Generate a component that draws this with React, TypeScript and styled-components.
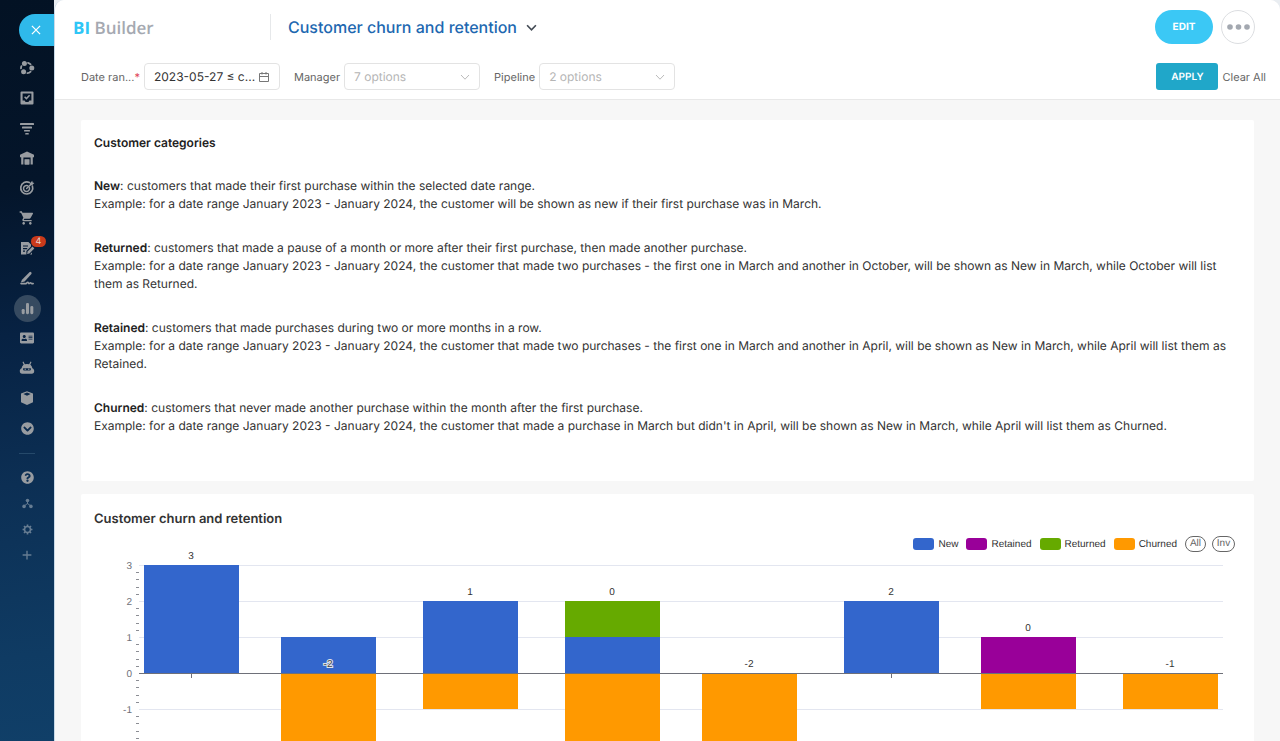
import React from "react";
import styled, { createGlobalStyle, css } from "styled-components";
import { MdShoppingCart } from "react-icons/md";
import { FaAddressCard, FaChevronCircleDown, FaQuestionCircle } from "react-icons/fa";

const Global = createGlobalStyle`
  * { box-sizing: border-box; }
  body { margin: 0; font-family: Inter, "Liberation Sans", sans-serif; font-size: 12px; color: #333; background: #e9edf1; text-rendering: geometricPrecision; }
  button, select { font-family: inherit; margin: 0; text-rendering: inherit; }
`;

const Shell = styled.div`
  display: flex;
  height: 100vh;
`;

const Nav = styled.nav`
  flex: 0 0 54px;
  display: flex;
  flex-direction: column;
  padding-top: 14px;
  background: linear-gradient(172deg, #031224 0%, #04152a 25%, #072243 45%, #0c2f54 65%, #0f3b63 88%, #103f68 100%);
  overflow: hidden;
`;

const CloseTab = styled.button`
  display: flex;
  align-items: center;
  align-self: flex-end;
  width: 35px;
  height: 32px;
  flex: none;
  padding: 0 0 0 12px;
  margin-bottom: 7px;
  border: 0;
  border-radius: 16px 0 0 16px;
  background: #2fb9ea;
  color: #fff;
`;

const NavItem = styled.a<{ $small?: boolean; $dim?: boolean }>`
  position: relative;
  flex: none;
  display: flex;
  align-items: center;
  justify-content: center;
  height: ${(p) => (p.$small ? 26 : 30)}px;
  color: ${(p) => (p.$dim ? "#667c92" : "#989ca1")};
`;

const ActiveRing = styled.span`
  display: flex;
  align-items: center;
  justify-content: center;
  width: 27px;
  height: 27px;
  border-radius: 50%;
  background: #364a60;
`;

const NavBadge = styled.span`
  position: absolute;
  top: 3px;
  left: 31px;
  width: 15px;
  height: 11px;
  border-radius: 6px;
  background: #c93a1b;
  color: #e6d6d2;
  font-size: 9px;
  line-height: 11px;
  text-align: center;
`;

const NavRule = styled.hr`
  width: 16px;
  flex: none;
  margin: 10px auto;
  border: 0;
  border-top: 1px solid #25496a;
`;

const Panel = styled.div`
  flex: 1;
  min-width: 0;
  display: flex;
  flex-direction: column;
  border-left: 1px solid #c9dae8;
  border-radius: 10px 10px 0 0;
  background: #f7f7f7;
  overflow: hidden;
`;

const Header = styled.header`
  flex: none;
  background: #fff;
  border-bottom: 1px solid #e8e8e8;
`;

const TitleRow = styled.div`
  display: flex;
  align-items: center;
  height: 54px;
  padding: 0 25px 0 18px;
`;

const Logo = styled.div`
  flex: 0 0 197px;
  font-family: "Open Sans", sans-serif;
  font-size: 17px;
  font-weight: 600;
  color: #a5a9b1;
`;

const LogoMark = styled.span`
  color: #2fc6f6;
  font-weight: 700;
`;

const TitleMenu = styled.button`
  display: flex;
  align-items: center;
  gap: 9px;
  height: 26px;
  padding: 0 0 0 17px;
  border: 0;
  border-left: 1px solid #e6e8ea;
  background: none;
  color: #2067b0;
  font-size: 16px;
  font-weight: 500;
`;

const Actions = styled.div<{ $tight?: boolean }>`
  display: flex;
  align-items: center;
  gap: ${(p) => (p.$tight ? 4 : 8)}px;
  margin-left: auto;
`;

const EditButton = styled.button`
  width: 58px;
  height: 34px;
  padding: 0;
  border: 0;
  border-radius: 17px;
  background: #3bc8f5;
  color: #fff;
  font-size: 10px;
  font-weight: 700;
`;

const MoreButton = styled.button`
  display: flex;
  align-items: center;
  justify-content: center;
  width: 34px;
  height: 34px;
  padding: 0;
  border: 1px solid #dcdee1;
  border-radius: 50%;
  background: #fff;
  color: #a3a8b0;
`;

const FilterRow = styled.div`
  display: flex;
  align-items: center;
  height: 45px;
  padding: 0 14px 0 26px;
`;

const Filter = styled.div`
  display: flex;
  align-items: center;
  gap: 4px;
  margin-right: 14px;
`;

const FilterLabel = styled.label`
  font-size: 11px;
  color: #666;
`;

const Required = styled.span`
  color: #e04355;
`;

const field = css`
  width: 136px;
  height: 27px;
  border: 1px solid #e3e3e3;
  border-radius: 4px;
  background: #fff;
  font-size: 12px;
`;

const DateField = styled.button`
  ${field}
  display: flex;
  align-items: center;
  justify-content: space-between;
  padding: 0 10px 0 9px;
  color: #333;
`;

const SelectWrap = styled.div`
  display: grid;
  align-items: center;
  & > * { grid-area: 1 / 1; }
  & > svg { justify-self: end; margin-right: 10px; pointer-events: none; }
`;

const SelectField = styled.select`
  ${field}
  appearance: none;
  padding: 0 9px;
  color: #b5b5b5;
`;

const ApplyButton = styled.button`
  width: 62px;
  height: 27px;
  padding: 0;
  border: 0;
  border-radius: 3px;
  background: #20a7c9;
  color: #fff;
  font-size: 10px;
  font-weight: 600;
`;

const ClearButton = styled.button`
  padding: 0;
  border: 0;
  background: none;
  color: #666;
  font-size: 11px;
`;

const Board = styled.main`
  flex: 1;
  min-height: 0;
  display: flex;
  flex-direction: column;
  gap: 13px;
  padding: 20px 26px;
  overflow-y: auto;
  scrollbar-width: none;
`;

const Card = styled.section`
  flex: none;
  background: #fff;
  border-radius: 2px;
`;

const TextCard = styled(Card)`
  padding: 14px 13px 46px;
`;

const CardHeading = styled.h2`
  margin: 0 0 25px;
  font-size: 12px;
  line-height: 18px;
  font-weight: 600;
  color: #222;
`;

const Definition = styled.p`
  margin: 0 0 26px;
  font-size: 12px;
  line-height: 18px;
  color: #333;
  &:last-child { margin-bottom: 0; }
`;

const Term = styled.strong`
  font-weight: 600;
  color: #222;
`;

const ChartTitle = styled.h2`
  margin: 0;
  padding: 16px 13px 8px;
  font-size: 13px;
  line-height: 18px;
  font-weight: 600;
  color: #333;
`;

const Legend = styled.div`
  display: flex;
  justify-content: flex-end;
  align-items: center;
  gap: 8px;
  height: 16px;
  padding-right: 19px;
  font-family: "Liberation Sans", sans-serif;
`;

const LegendItem = styled.button`
  display: flex;
  align-items: center;
  gap: 4px;
  padding: 0;
  border: 0;
  background: none;
  color: #333;
  font-size: 10px;
`;

const Swatch = styled.span<{ $color: string }>`
  width: 21px;
  height: 12px;
  border-radius: 3px;
  background: ${(p) => p.$color};
`;

const LegendPick = styled.button<{ $wide?: boolean }>`
  width: ${(p) => (p.$wide ? 23 : 21)}px;
  height: 16px;
  margin-right: ${(p) => (p.$wide ? 0 : -2)}px;
  padding: 0;
  border: 1px solid #666;
  border-radius: 8px;
  background: #fff;
  color: #666;
  font-size: 10px;
  line-height: 14px;
`;

const ChartSvg = styled.svg`
  display: block;
  width: 100%;
  height: auto;
  font-family: "Liberation Sans", sans-serif;
  font-size: 10px;
`;

const BLUE = "#3366cc";
const PURPLE = "#990099";
const GREEN = "#66aa00";
const ORANGE = "#ff9900";

const legend = [
  { name: "New", color: BLUE },
  { name: "Retained", color: PURPLE },
  { name: "Returned", color: GREEN },
  { name: "Churned", color: ORANGE },
];

type Column = { x: number; up: [string, number][]; down: number; label?: string; tick?: boolean };

const columns: Column[] = [
  { x: 63, up: [[BLUE, 3]], down: 0, label: "3", tick: true },
  { x: 200, up: [[BLUE, 1]], down: 3 },
  { x: 342, up: [[BLUE, 2]], down: 1, label: "1" },
  { x: 484, up: [[BLUE, 1], [GREEN, 1]], down: 2, label: "0" },
  { x: 621, up: [], down: 2, label: "-2" },
  { x: 763, up: [[BLUE, 2]], down: 0, label: "2", tick: true },
  { x: 900, up: [[PURPLE, 1]], down: 1, label: "0" },
  { x: 1042, up: [], down: 1, label: "-1" },
];

const UNIT = 36;
const ZERO = 121;
const BAR = 95;

function Chart() {
  const values = [3, 2, 1, 0, -1, -2, -3];
  return (
    <ChartSvg viewBox="0 0 1173 260" role="img" aria-label="Customer churn and retention chart">
      {values.map((v) => (
        <g key={v}>
          <rect x="58" y={ZERO - v * UNIT} width="1084" height="1" fill="#e3e6f0" />
          <text x="51" y={ZERO - v * UNIT + 4} textAnchor="end" fill="#6e7079">{v}</text>
          {v > -3 &&
            [1, 2, 3, 4].map((m) => (
              <rect key={m} x="55" y={Math.round(ZERO - v * UNIT + (m * UNIT) / 5)} width="3" height="1" fill="#8b8d94" />
            ))}
        </g>
      ))}
      {columns.map((c) => {
        let top = ZERO;
        return (
          <g key={c.x}>
            {c.up.map(([color, n]) => {
              top -= n * UNIT;
              return <rect key={color} x={c.x} y={top} width={BAR} height={n * UNIT} fill={color} />;
            })}
            {c.down > 0 && <rect x={c.x} y={ZERO} width={BAR} height={c.down * UNIT} fill={ORANGE} />}
            {c.label && (
              <text x={c.x + 47} y={top - 6} textAnchor="middle" fill="#333">{c.label}</text>
            )}
            {c.tick && <rect x={c.x + 47} y={ZERO} width="1" height="5" fill="#6e7079" />}
          </g>
        );
      })}
      <text x="247" y="115" stroke="#dfe3ea" strokeWidth="2" paintOrder="stroke" fill="#444" textAnchor="middle">-2</text>
      <rect x="58" y={ZERO} width="1084" height="1" fill="#6e7079" />
    </ChartSvg>
  );
}

const Icon = ({ size = 16, children }: { size?: number; children: React.ReactNode }) => (
  <svg width={size} height={size} viewBox="0 0 16 16" fill="currentColor" aria-hidden="true">{children}</svg>
);

const line = { fill: "none", stroke: "currentColor", strokeLinecap: "round", strokeLinejoin: "round" } as const;

const AutomationIcon = () => (
  <Icon>
    <circle cx="5.4" cy="3.4" r="2.5" />
    <circle cx="12.8" cy="8" r="2.5" />
    <circle cx="4.6" cy="11.8" r="2.5" />
    <path d="M9 2.800A5.600 5.600 0 0 1 11.600 4.400M2.400 6.200A5.400 5.400 0 0 0 2 8.400M8.400 13.200A5.600 5.600 0 0 0 11.600 11.600" {...line} strokeWidth="1.800" />
  </Icon>
);

const TaskIcon = () => (
  <Icon>
    <path fillRule="evenodd" d="M2.500 1.500h11a1 1 0 0 1 1 1v11a1 1 0 0 1-1 1h-11a1 1 0 0 1-1-1v-11a1 1 0 0 1 1-1zM3.600 3.500v7h2l1 1.600h2.800l1-1.600h2v-7z" />
    <path d="M5.600 6.800l1.800 1.800 3.200-3.400" fill="none" stroke="currentColor" strokeWidth="1.500" />
  </Icon>
);

const FunnelIcon = () => (
  <Icon>
    <rect x="1" y="3" width="14" height="2" rx="0.600" />
    <rect x="3" y="6.500" width="10" height="2" rx="0.600" />
    <rect x="5" y="10" width="6" height="1.600" rx="0.600" />
    <rect x="6.200" y="13" width="3.600" height="1.600" rx="0.600" />
  </Icon>
);

const WarehouseIcon = () => (
  <Icon>
    <path fillRule="evenodd" d="M8 1.600l7 3.200v2.400h-1.200v7.200H2.200V7.200H1V4.800zM4.400 7.400v7h1.100v-5.200h5v5.200h1.100v-7z" />
    <path fillRule="evenodd" d="M5.900 9.800h4.200v4.600H5.900zM7.200 11v1.600h1.600V11z" />
  </Icon>
);

const TargetIcon = () => (
  <Icon>
    <path d="M10.400 2.600A6 6 0 1 0 13.400 6" {...line} strokeWidth="1.700" />
    <path d="M8.700 5.700A3 3 0 1 0 10.400 7.600" {...line} strokeWidth="1.500" />
    <path d="M7.600 8.600L12 4.200" {...line} strokeWidth="1.400" />
    <path d="M11 3.200L13.200.8l.5 1.700 1.700.5-2.400 2.300H11z" />
  </Icon>
);

const DocumentIcon = () => (
  <Icon>
    <path fillRule="evenodd" d="M2 2h7.400L12 4.600v2L7.400 11v3.400H2zM4 5.400v1.200h5V5.400zM4 8v1.200h4.200V8zM4 10.600v1.200h2v-1.200z" />
    <path d="M8.600 11.600l4.900-5 1.800 1.800-4.900 5-2.300.5z" />
    <path d="M11 14.400h2v-2z" />
  </Icon>
);

const SignIcon = () => (
  <Icon>
    <path d="M3 9.800L10.400 2.200q1-.8 1.800 0t.2 1.800L5.600 11.400l-3.800 1.200z" />
    <path d="M2 13.600h5.200c1-1.800 2-1.400 2.400-.4.400.8 1 .2 1.600-.2.600-.4 1 .6 1.600.6h1.400" {...line} strokeWidth="1.600" />
  </Icon>
);

const BarsIcon = () => (
  <Icon size={15}>
    <rect x="1.800" y="8.400" width="3.200" height="5.600" rx="1.400" />
    <rect x="6.400" y="2" width="3.200" height="12" rx="1.400" />
    <rect x="11" y="5.400" width="3.200" height="8.600" rx="1.400" />
  </Icon>
);

const RobotIcon = () => (
  <Icon>
    <path d="M4.200 2.200l1.200 2.600M11.800 2.200l-1.200 2.600" {...line} strokeWidth="1.200" />
    <path fillRule="evenodd" d="M8 4c3.200 0 5 1.600 5.400 4.200 1.300.5 1.800 1.600 1.800 2.800 0 1.800-.8 2.800-2.400 2.800H3.200C1.600 13.800.8 12.800.8 11c0-1.200.5-2.300 1.800-2.800C3 5.600 4.800 4 8 4zM4.200 8.200c-.4 1.500.2 2.300 1.400 2.300h4.800c1.200 0 1.800-.8 1.400-2.300z" />
    <circle cx="6.200" cy="9.300" r="0.700" />
    <circle cx="9.800" cy="9.300" r="0.700" />
  </Icon>
);

const BoxIcon = () => (
  <Icon>
    <path fillRule="evenodd" d="M8 1.200l6 2.400v8.600L8 15l-6-2.800V3.600zM4.400 4L8 5.700 11.600 4 8 2.500z" />
  </Icon>
);

const NodesIcon = () => (
  <Icon size={11}>
    <circle cx="8" cy="3.600" r="2.600" />
    <circle cx="3" cy="12.200" r="2.600" />
    <circle cx="13" cy="12.200" r="2.600" />
    <path d="M8 4v4.400M8 8l-4 3M8 8l4 3" {...line} strokeWidth="1.400" />
  </Icon>
);

const GearIcon = () => (
  <Icon size={11}>
    <circle cx="8" cy="8" r="4.400" fill="none" stroke="currentColor" strokeWidth="2.400" />
    <path d="M8 .8v2.400M8 12.800v2.400M.8 8h2.400M12.800 8h2.400M2.900 2.900l1.700 1.700M11.400 11.400l1.700 1.700M2.900 13.100l1.700-1.700M11.400 4.600l1.700-1.700" stroke="currentColor" strokeWidth="2.400" />
  </Icon>
);

const PlusIcon = () => (
  <Icon size={10}>
    <path d="M8 1v14M1 8h14" stroke="currentColor" strokeWidth="2.200" />
  </Icon>
);

const ChevronDown = ({ width, color, stroke = 1 }: { width: number; color: string; stroke?: number }) => (
  <svg width={width} height={width} viewBox="0 0 10 10" aria-hidden="true">
    <path d="M1 3l4 4.200L9 3" fill="none" stroke={color} strokeWidth={stroke} />
  </svg>
);

const CalendarIcon = () => (
  <svg width="10" height="10" viewBox="0 0 10 10" fill="none" stroke="#777" aria-hidden="true">
    <path d="M.5 1.500h9v8h-9zM.5 4.500h9M3 0v2.500M7 0v2.500" />
  </svg>
);

const mainNav: { label: string; icon: React.ReactNode; active?: boolean; badge?: string }[] = [
  { label: "Automation", icon: <AutomationIcon /> },
  { label: "Tasks", icon: <TaskIcon /> },
  { label: "CRM", icon: <FunnelIcon /> },
  { label: "Inventory", icon: <WarehouseIcon /> },
  { label: "Marketing", icon: <TargetIcon /> },
  { label: "Store", icon: <MdShoppingCart size={16} /> },
  { label: "Documents", icon: <DocumentIcon />, badge: "4" },
  { label: "Sign", icon: <SignIcon /> },
  { label: "Analytics", icon: <BarsIcon />, active: true },
  { label: "Employees", icon: <FaAddressCard size={14} /> },
  { label: "Robots", icon: <RobotIcon /> },
  { label: "Market", icon: <BoxIcon /> },
  { label: "More", icon: <FaChevronCircleDown size={13} /> },
];

export default function App() {
  return (
    <>
      <Global />
      <Shell>
        <Nav aria-label="Main">
          <CloseTab aria-label="Close">
            <svg width="10" height="10" viewBox="0 0 11 11" aria-hidden="true">
              <path d="M1 1l9 9M10 1l-9 9" stroke="currentColor" strokeWidth="1.400" />
            </svg>
          </CloseTab>
          {mainNav.map((n) => (
            <NavItem key={n.label} href="#" aria-label={n.label}>
              {n.active ? <ActiveRing>{n.icon}</ActiveRing> : n.icon}
              {n.badge && <NavBadge>{n.badge}</NavBadge>}
            </NavItem>
          ))}
          <NavRule />
          <NavItem href="#" $small aria-label="Help"><FaQuestionCircle size={13} /></NavItem>
          <NavItem href="#" $small $dim aria-label="Structure"><NodesIcon /></NavItem>
          <NavItem href="#" $small $dim aria-label="Settings"><GearIcon /></NavItem>
          <NavItem href="#" $small $dim aria-label="Add"><PlusIcon /></NavItem>
        </Nav>
        <Panel>
          <Header>
            <TitleRow>
              <Logo><LogoMark>BI</LogoMark> Builder</Logo>
              <TitleMenu>
                Customer churn and retention
                <ChevronDown width={11} color="#444b55" stroke={1.5} />
              </TitleMenu>
              <Actions>
                <EditButton>EDIT</EditButton>
                <MoreButton aria-label="More actions">
                  <svg width="23" height="6" viewBox="0 0 23 6" fill="currentColor" aria-hidden="true">
                    <circle cx="3" cy="3" r="2.800" />
                    <circle cx="11.500" cy="3" r="2.800" />
                    <circle cx="20" cy="3" r="2.800" />
                  </svg>
                </MoreButton>
              </Actions>
            </TitleRow>
            <FilterRow>
              <Filter>
                <FilterLabel htmlFor="date">Date ran...<Required>*</Required></FilterLabel>
                <DateField id="date">2023-05-27 ≤ c... <CalendarIcon /></DateField>
              </Filter>
              <Filter>
                <FilterLabel htmlFor="manager">Manager</FilterLabel>
                <SelectWrap>
                  <SelectField id="manager"><option>7 options</option></SelectField>
                  <ChevronDown width={10} color="#bbb" />
                </SelectWrap>
              </Filter>
              <Filter>
                <FilterLabel htmlFor="pipeline">Pipeline</FilterLabel>
                <SelectWrap>
                  <SelectField id="pipeline"><option>2 options</option></SelectField>
                  <ChevronDown width={10} color="#bbb" />
                </SelectWrap>
              </Filter>
              <Actions $tight>
                <ApplyButton>APPLY</ApplyButton>
                <ClearButton>Clear All</ClearButton>
              </Actions>
            </FilterRow>
          </Header>
          <Board>
            <TextCard>
              <CardHeading>Customer categories</CardHeading>
              <Definition>
                <Term>New</Term>: customers that made their first purchase within the selected date range.
                <br />
                Example: for a date range January 2023 - January 2024, the customer will be shown as new if their first purchase was in March.
              </Definition>
              <Definition>
                <Term>Returned</Term>: customers that made a pause of a month or more after their first purchase, then made another purchase.
                <br />
                Example: for a date range January 2023 - January 2024, the customer that made two purchases - the first one in March and another in October, will be shown as New in March, while October will list them as Returned.
              </Definition>
              <Definition>
                <Term>Retained</Term>: customers that made purchases during two or more months in a row.
                <br />
                Example: for a date range January 2023 - January 2024, the customer that made two purchases - the first one in March and another in April, will be shown as New in March, while April will list them as Retained.
              </Definition>
              <Definition>
                <Term>Churned</Term>: customers that never made another purchase within the month after the first purchase.
                <br />
                Example: for a date range January 2023 - January 2024, the customer that made a purchase in March but didn't in April, will be shown as New in March, while April will list them as Churned.
              </Definition>
            </TextCard>
            <Card>
              <ChartTitle>Customer churn and retention</ChartTitle>
              <Legend>
                {legend.map((l) => (
                  <LegendItem key={l.name}><Swatch $color={l.color} />{l.name}</LegendItem>
                ))}
                <LegendPick>All</LegendPick>
                <LegendPick $wide>Inv</LegendPick>
              </Legend>
              <Chart />
            </Card>
          </Board>
        </Panel>
      </Shell>
    </>
  );
}
